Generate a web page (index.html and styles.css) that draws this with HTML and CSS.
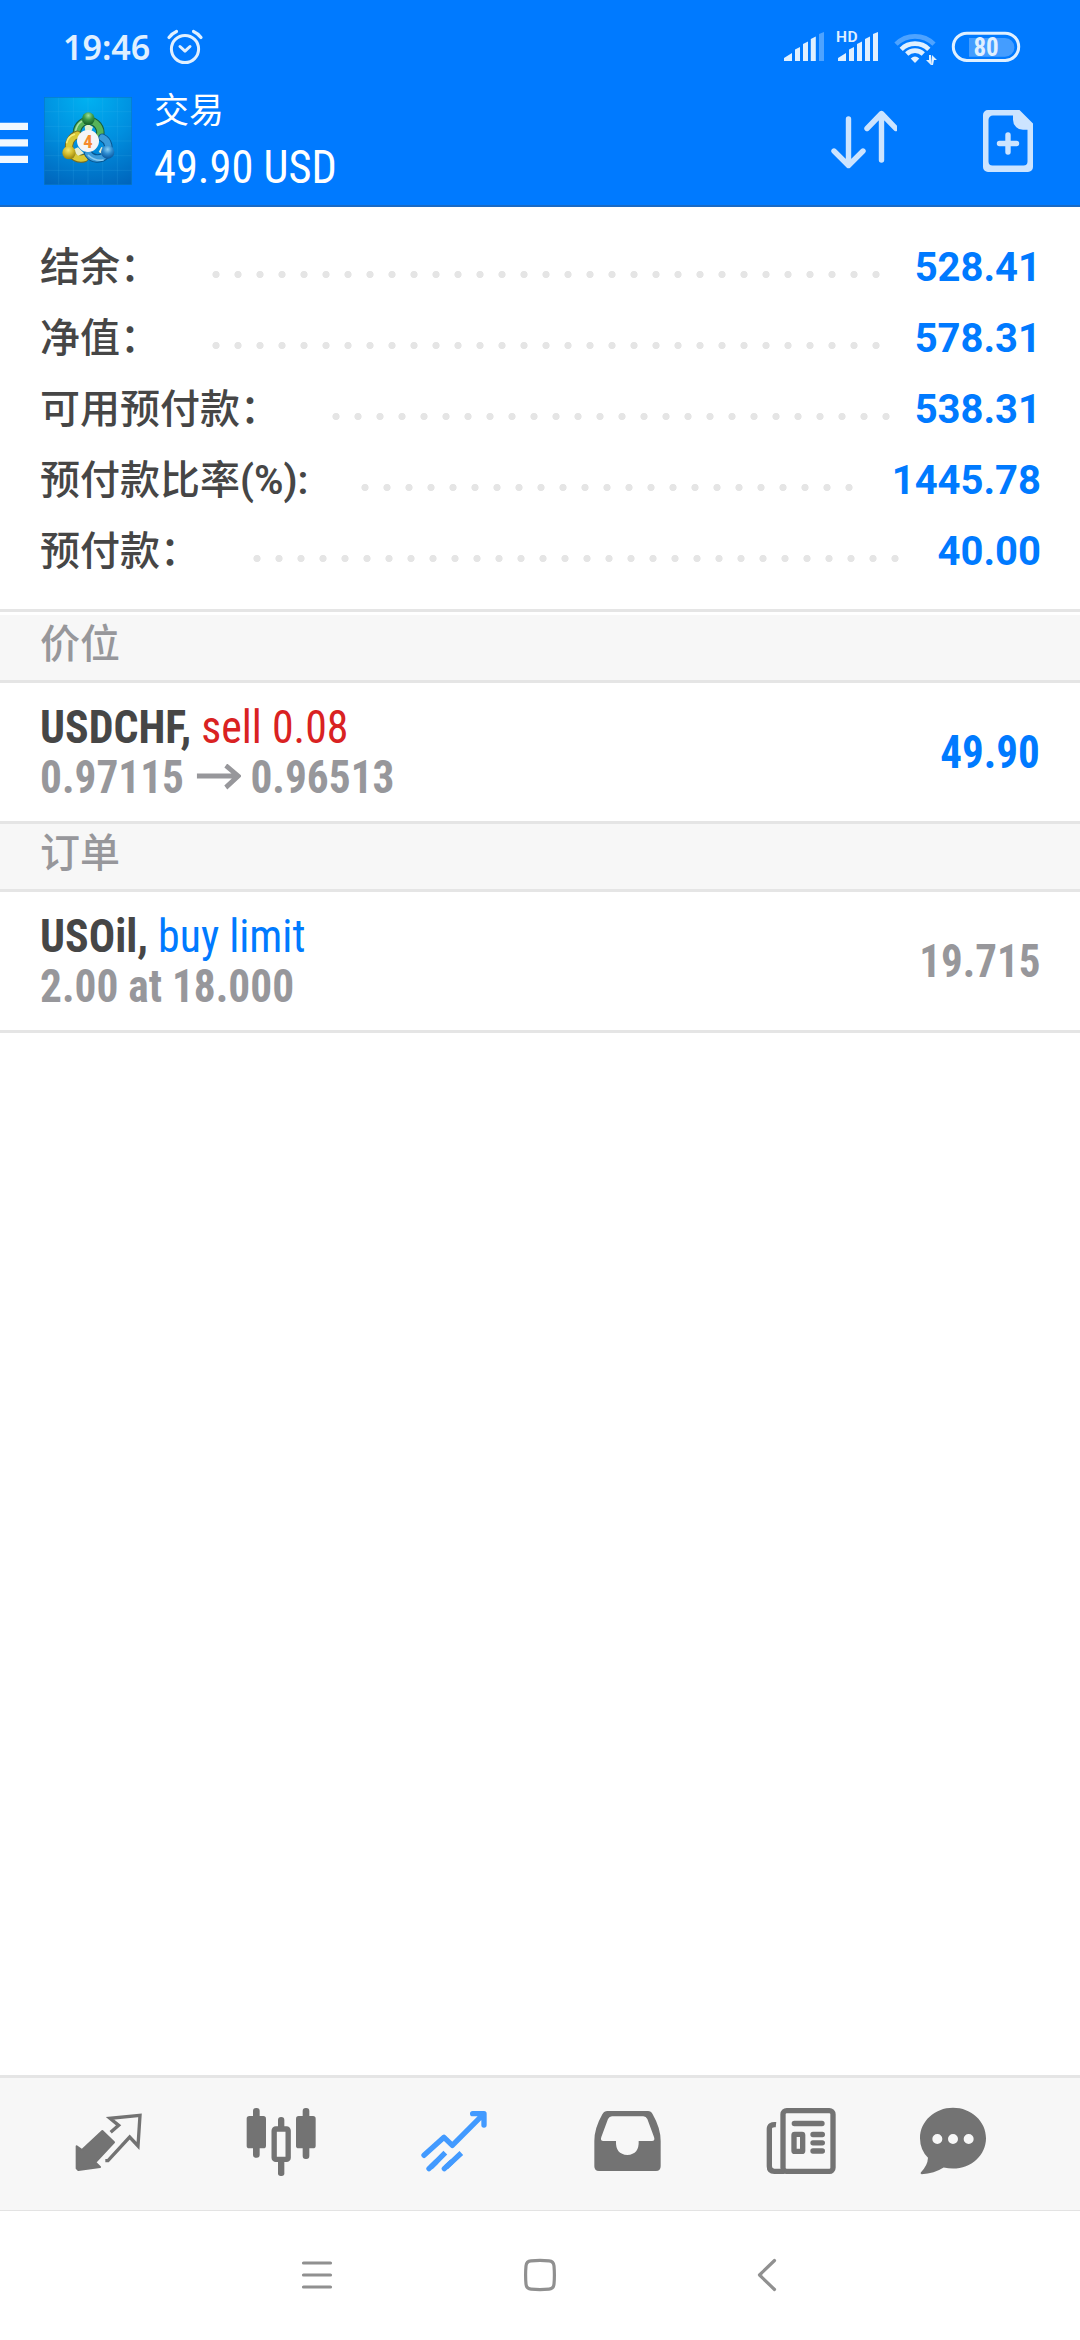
FILE: index.html
```
<!DOCTYPE html>
<html lang="zh-CN">
<head>
<meta charset="utf-8">
<title>交易</title>
<link rel="stylesheet" href="styles.css">
</head>
<body>
<div class="screen">
  <header class="top">
    <div class="status">
      <span class="clock">19:46</span>
      <svg class="alarm" width="38" height="36" viewBox="166 29 38 36" fill="none" stroke="currentColor" stroke-width="3" stroke-linecap="round" stroke-linejoin="round">
        <circle cx="185" cy="49" r="13.6"/>
        <path d="M180 46.5l5 4.6 5-4.6"/>
        <path d="M169 37.5q3-4 7.500-6M201 37.500q-3-4-7.500-6" stroke-width="3.200"/>
      </svg>
      <svg class="signals" width="238" height="38" viewBox="783 29 238 38" fill="currentColor">
        <path d="M784 61v-3l8-5v8zM795 61V49.500l5-2.500v14zM803 61V44l5-2.500V61zM810.800 61V39l5-2.500V61z"/>
        <path d="M819 61V34l5-2v29z" opacity=".35"/>
        <path d="M838 61v-3l8-5v8zM849 61V49.500l5-2.500v14zM857 61V44l5-2.500V61zM865 61V39l5-2.500V61zM873 61V34l5-2v29z"/>
        <text class="hd" x="836" y="42">HD</text>
        <g fill="none" stroke="currentColor" stroke-width="4.600">
          <path d="M896 44.200a27 27 0 0 1 38 0" opacity=".35"/>
          <path d="M901.200 49.300a19.500 19.500 0 0 1 27.600 0"/>
          <path d="M906.700 54a11.800 11.800 0 0 1 16.600 0"/>
        </g>
        <path d="M910.700 58.500q4.300-4 8.600 0L915 63z"/>
        <path d="M929 55h2v10l-5-5h3zM933 65h-2l1-10 5 5h-3z" />
        <rect x="953.300" y="33.200" width="65.400" height="27.200" rx="13.600" fill="none" stroke="currentColor" stroke-width="3"/>
        <path d="M969 38h36a9.400 9.400 0 0 1 0 18.800h-36z" opacity=".3"/>
        <text class="battery" x="973.400" y="56.400">80</text>
      </svg>
    </div>
    <div class="bar">
      <svg class="menu" width="28" height="42" viewBox="0 0 28 42" fill="currentColor"><path d="M0 .700h28v7.300H0zM0 17.200h28v7.300H0zM0 33.700h28v7.300H0z"/></svg>
      <svg class="logo" width="88" height="88" viewBox="12 15 264 264">
        <defs>
          <radialGradient id="sky" cx=".5" cy="0" r="1.100"><stop offset="0" stop-color="#00b2f2"/><stop offset=".5" stop-color="#008fdf"/><stop offset="1" stop-color="#0064bb"/></radialGradient>
          <radialGradient id="g" cx=".5" cy=".25" r=".7"><stop offset="0" stop-color="#9fe09a"/><stop offset=".5" stop-color="#3c9a48"/><stop offset="1" stop-color="#17652c"/></radialGradient>
          <radialGradient id="y" cx=".45" cy=".3" r=".7"><stop offset="0" stop-color="#f2e66e"/><stop offset=".5" stop-color="#d2bb2c"/><stop offset="1" stop-color="#94800e"/></radialGradient>
          <radialGradient id="b" cx=".5" cy=".3" r=".7"><stop offset="0" stop-color="#8ad0f5"/><stop offset=".5" stop-color="#2b8ad0"/><stop offset="1" stop-color="#0a559a"/></radialGradient>
        </defs>
        <rect x="12" y="15" width="264" height="264" fill="url(#sky)"/>
        <path d="M56 15v264M100 15v264M144 15v264M188 15v264M232 15v264M12 59h264M12 103h264M12 147h264M12 191h264M12 235h264" stroke="#4cc3f2" stroke-opacity=".22" stroke-width="2"/>
        <rect x="13" y="16" width="262" height="262" fill="none" stroke="#0878c8" stroke-width="2"/>
        <g fill="none" stroke-linecap="round">
          <path d="M112 130a35 35 0 1 1 68 0" stroke="#175f3c" stroke-width="25"/>
          <path d="M112 130a35 35 0 1 1 68 0" stroke="#56b358" stroke-width="19"/>
          <path d="M107 118a40 40 0 0 1 17-29" stroke="#abe0a2" stroke-width="5"/>
          <path d="M112 128a35 36 0 1 0 22 70" stroke="#776c20" stroke-width="25"/>
          <path d="M112 128a35 36 0 1 0 22 70" stroke="#d9c936" stroke-width="19"/>
          <path d="M103 127a32 32 0 0 0-23 25" stroke="#f5ec7b" stroke-width="5"/>
          <path d="M187 137a33 33 0 1 1-42 48" stroke="#075590" stroke-width="25"/>
          <path d="M187 137a33 33 0 1 1-42 48" stroke="#3b9bda" stroke-width="19"/>
          <path d="M145 190q20 18 44 14" stroke="#8bcbf1" stroke-width="5"/>
        </g>
        <path d="M98 173l16-7 18 18-18 7zM176 180l8-15 14 6-9 16z" fill="#e8edcf"/>
        <path d="M134 103l11-6 14 8-5 13h-18z" fill="#dff0cf"/>
        <circle cx="145" cy="80" r="19" fill="url(#g)"/>
        <circle cx="87" cy="182" r="20" fill="url(#y)"/>
        <circle cx="203" cy="180" r="20" fill="url(#b)"/>
        <circle cx="144" cy="147" r="33" fill="#f4f5f7"/>
        <text class="logo-num" x="144" y="167" text-anchor="middle">4</text>
      </svg>
      <div class="titles">
        <div class="title">交易</div>
        <div class="profit"><span class="squeeze-title">49.90 USD</span></div>
      </div>
      <svg class="action" width="66" height="62" viewBox="831 111 66 62" fill="none" stroke="currentColor" stroke-width="5.400" stroke-linecap="round" stroke-linejoin="round">
        <path d="M848.500 120v46.500M834 152l14.500 14.500L863 152M881.500 161v-46M867 129.500l14.500-15L896 129.500"/>
      </svg>
      <svg class="action" width="50" height="62" viewBox="983 110.500 50 62" fill="currentColor">
        <path fill-rule="evenodd" d="M988 110.500h31.500L1033 124v43.500a5 5 0 0 1-5 5h-40a5 5 0 0 1-5-5v-52a5 5 0 0 1 5-5zm5 5.500a4.500 4.500 0 0 0-4.500 4.500V162a4 4 0 0 0 4 4h31a4 4 0 0 0 4-4v-31.700h-4.500a10 10 0 0 1-10-10V116z"/>
        <path d="M1008 135.500v17M999.500 144h17" stroke="currentColor" stroke-width="5.400" stroke-linecap="round"/>
      </svg>
    </div>
  </header>

  <main class="content">
    <section class="summary">
      <div class="row"><span class="label two">结余：</span><i class="dots" style="width:682px"></i><span class="value">528.41</span></div>
      <div class="row"><span class="label two">净值：</span><i class="dots" style="width:682px"></i><span class="value">578.31</span></div>
      <div class="row"><span class="label five">可用预付款：</span><i class="dots" style="width:572px"></i><span class="value">538.31</span></div>
      <div class="row"><span class="label ratio">预付款比率<span class="unit">(%):</span></span><i class="dots" style="width:506px"></i><span class="value">1445.78</span></div>
      <div class="row"><span class="label three">预付款：</span><i class="dots" style="width:660px"></i><span class="value">40.00</span></div>
    </section>
    <h2 class="heading first">价位</h2>
    <article class="trade">
      <div class="info">
        <div class="symbol"><b>USDCHF,</b> <span class="sell">sell 0.08</span></div>
        <div class="detail">0.97115<svg class="arrow" width="48" height="26" viewBox="0 0 48 26" fill="none" stroke="currentColor" stroke-width="5"><path d="M0 12h45M31.500 1.500L45 12 31.500 23.500"/></svg>0.96513</div>
      </div>
      <div class="amount up">49.90</div>
    </article>
    <h2 class="heading">订单</h2>
    <article class="trade">
      <div class="info">
        <div class="symbol"><b>USOil,</b> <span class="buy">buy limit</span></div>
        <div class="detail">2.00 at 18.000</div>
      </div>
      <div class="amount">19.715</div>
    </article>
  </main>

  <nav class="tabs">
    <svg width="173" height="132" viewBox="-54 54 519 396" fill="currentColor">
      <path d="M187 213l35 34-56 60 14 14-65 9-5-5v-66l16 11z" stroke="currentColor" stroke-width="6" stroke-linejoin="round"/>
      <path d="M212 217l24-21-26-21 90-9-6 92-25-27-65 71h-8" fill="none" stroke="currentColor" stroke-width="10"/>
    </svg>
    <svg width="173" height="132" viewBox="465 54 519 396" fill="currentColor">
      <rect x="639" y="144" width="20" height="149" rx="9"/><rect x="620" y="168" width="58" height="97" rx="8"/>
      <rect x="788" y="144" width="20" height="153" rx="9"/><rect x="768" y="168" width="59" height="97" rx="8"/>
      <rect x="714" y="171" width="19" height="40" rx="9"/><rect x="714" y="298" width="19" height="50" rx="8"/>
      <rect x="702.500" y="207" width="42" height="91" rx="5" fill="none" stroke="currentColor" stroke-width="16"/>
    </svg>
    <svg class="active" width="173" height="132" viewBox="984 54 519 396" fill="none" stroke="currentColor" stroke-width="16" stroke-linejoin="round">
      <path d="M1152 286l60-54 25 24 92-92M1298 161h34v34" stroke-linecap="round"/>
      <path d="M1172 322l44-44M1218 322l46-43"/>
      <path d="M1167 326l20-19M1213 326l20-19" stroke-linecap="round"/>
    </svg>
    <svg width="173" height="132" viewBox="-57 54 519 396" fill="currentColor">
      <path fill-rule="evenodd" d="M142 153h122q9 0 14 10 24 42 24 80v76q0 14-14 14H117q-14 0-14-14v-76q0-38 24-80 6-10 15-10zm14 16q-8 0-12 8l-20 54q-4 12 6 12h38q-2 40 34 42 36-2 34-42h40q10 0 6-12l-20-54q-4-8-12-8z"/>
    </svg>
    <svg width="173" height="132" viewBox="462 54 519 396" fill="none" stroke="currentColor" stroke-width="16">
      <rect x="669" y="152" width="150" height="182" rx="11"/>
      <path d="M648 194q-20-2-20 13v112q0 15 15 15h30"/>
      <path d="M703 190.500h83M759 223.500h28M759 248.500h28M759 273h28" stroke-linecap="round"/>
      <rect x="702" y="223" width="26" height="51" rx="2"/>
    </svg>
    <svg width="132" height="132" viewBox="981 54 396 396" fill="currentColor">
      <path fill-rule="evenodd" d="M1179 143.500c55 0 99 41 99 91s-44 91-99 91q-14 0-28-3-28 18-66 20-6-3-2-6 20-20 21-43-24-25-24-59c0-50 44-91 99-91zM1132 222a15 15 0 1 0 0 30 15 15 0 0 0 0-30zm47 0a15 15 0 1 0 0 30 15 15 0 0 0 0-30zm47 0a15 15 0 1 0 0 30 15 15 0 0 0 0-30z"/>
    </svg>
  </nav>

  <footer class="system">
    <svg width="34" height="34" viewBox="0 0 34 34"><path d="M3.500 5h27M3.500 17h27M3.500 29h27"/></svg>
    <svg width="34" height="34" viewBox="0 0 34 34"><path d="M7 2.800q9-.8 18 0 4.500.4 5 5 .8 9.200 0 18.400-.5 4.600-5 5-9 .8-18 0-4.500-.4-5-5-.8-9.200 0-18.400.5-4.600 5-5z"/></svg>
    <svg width="34" height="34" viewBox="0 0 34 34"><path d="M26.500 2.500L11.500 17l15 14.500"/></svg>
  </footer>
</div>
</body>
</html>
```

FILE: styles.css
```
* { box-sizing: border-box; }
body {
  margin: 0;
  background: #fff;
  font-family: Roboto, "Noto Sans CJK SC", sans-serif;
}
svg { display: block; flex: none; }
.screen { width: 1080px; height: 2340px; display: flex; flex-direction: column; overflow: hidden; }

/* Header */
.top { height: 207px; background: #007aff; border-bottom: 2px solid #1a6ac4; color: #fff; display: flex; flex-direction: column; }
.status { height: 90px; padding: 0 59px 0 63px; display: flex; align-items: flex-start; color: #e0f0ff; }
.clock { width: 103px; padding-top: 27px; font: 600 34px/40px "Noto Sans", sans-serif; }
.alarm { margin-top: 29px; }
.signals { margin: 29px 0 0 auto; }
.hd { font: 600 15.5px Roboto, sans-serif; letter-spacing: .5px; }
.battery { font: 700 25px "Roboto Condensed", Roboto, sans-serif; }
.bar { height: 115px; display: flex; align-items: flex-start; padding-right: 47px; }
.menu { margin: 32px 16px 0 0; color: #f0f8ff; }
.logo { margin-top: 7px; }
.logo-num { font: 700 56px "Roboto Condensed", Roboto, sans-serif; fill: #f58a2c; }
.titles { flex: 1; padding-left: 22px; }
.title { font-size: 35px; line-height: 43px; }
.profit { font: 400 47px/56px "Roboto Condensed", Roboto, sans-serif; margin-top: 6px; }
.squeeze-title { display: inline-block; transform: scaleX(.944); transform-origin: 0 0; }
.action { color: #cce4ff; margin: 20px 0 0; }
.action + .action { margin: 20px 0 0 86px; }

/* Account summary */
.summary { padding: 25px 39px 22px 40px; height: 402px; }
.content { flex: 1; }
.row { display: flex; height: 71px; line-height: 71px; font-size: 40px; font-weight: 700; }
.label { color: #464646; flex: none; font-weight: 500; white-space: nowrap; }
.label.two { width: 165px; }
.label.five { width: 285px; }
.label.ratio { width: 314px; }
.label.three { width: 205.500px; }
.unit { font-weight: 600; }
.dots { flex: none; height: 7px; margin-top: 39px; background: radial-gradient(circle at 50% 50%, #e5e5e5 3.200px, transparent 4px) 0 0 / 22px 7px repeat-x; }
.value { margin-left: auto; color: #007aff; }

/* Trades */
.heading { margin: 0; height: 71px; padding-left: 40px; border: solid #e5e5e5; border-width: 3px 0; background: #f7f7f7; color: #97979b; font-size: 40px; font-weight: 500; line-height: 59px; }
.heading.first { height: 74px; box-shadow: inset 0 3px #fff; padding-top: 3px; }
.trade { height: 138px; padding: 0 40px; display: flex; align-items: center; justify-content: space-between; font: 700 47px/50px "Roboto Condensed", Roboto, sans-serif; color: #97979b; white-space: nowrap; }
.trade:last-child { height: 141px; border-bottom: 3px solid #e5e5e5; }
.symbol { color: #464646; font-weight: 400; transform: scaleX(.933); transform-origin: 0 0; }
.sell { color: #d92222; }
.buy { color: #007aff; }
.detail { display: flex; align-items: center; transform: scaleX(.922); transform-origin: 0 0; }
.arrow { margin: 0 10.600px 0 13.500px; }
.amount { transform: scaleX(.915); transform-origin: 100% 0; }
.amount.up { color: #007aff; }

/* Bottom bars */
.tabs { height: 136px; padding-left: 22px; display: flex; background: #f7f7f7; border-top: 3px solid #e5e5e5; border-bottom: 1px solid #e3e3e3; color: #737373; }
.active { color: #429aff; }
.system { height: 129px; padding: 0 298px 2px 300px; display: flex; align-items: center; justify-content: space-between; }
.system svg { fill: none; stroke: #909090; stroke-width: 3.200; stroke-linecap: round; stroke-linejoin: round; }
```
